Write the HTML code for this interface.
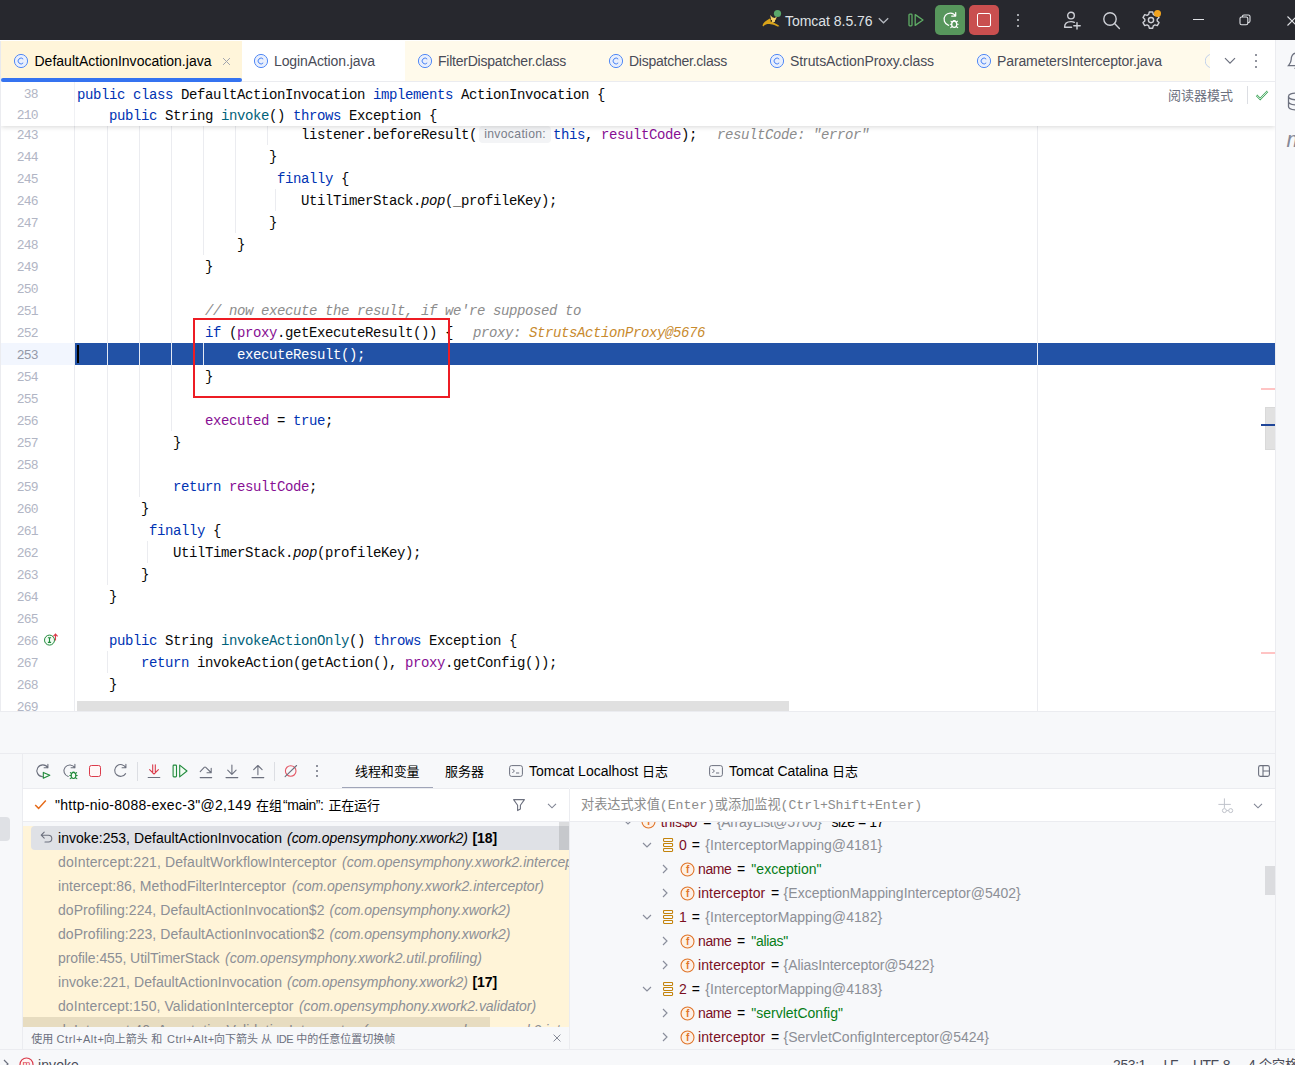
<!DOCTYPE html>
<html lang="zh"><head><meta charset="utf-8"><title>IDE</title>
<style>
*{box-sizing:border-box;margin:0;padding:0}
html,body{width:1295px;height:1065px;overflow:hidden;background:#f7f8fa}
body{position:relative;font-family:"Liberation Sans","Noto Sans CJK SC",sans-serif;font-size:13.5px;color:#000}
.a{position:absolute}
.t{position:absolute;white-space:pre;line-height:20px;height:20px}
svg{position:absolute;overflow:visible}
.mono{font-family:"Liberation Mono","Noto Sans CJK SC",monospace}
/* editor */
#ed{position:absolute;left:0;top:82px;width:1275px;height:629px;border-bottom:0;background:#fff;overflow:hidden;border-left:1px solid #ebecf0}
.ln{position:absolute;left:0;width:36.8px;padding-top:1.9px;text-align:right;font-family:"Liberation Mono",monospace;font-size:13px;letter-spacing:-.8px;line-height:22px;height:22px;color:#b1b5c4}
.cl{position:absolute;left:77px;white-space:pre;font-family:"Liberation Mono","Noto Sans CJK SC",monospace;font-size:14px;letter-spacing:-.4014px;line-height:22px;height:22px;color:#080808;padding-top:1px}
.k{color:#0033b3}.m{color:#00627a}.f{color:#871094}.c{color:#8c8c8c;font-style:italic}.i{font-style:italic}
.dv{color:#8c8c8c;font-style:italic}.do{color:#c88a2e;font-style:italic}
.g{position:absolute;width:1px;background:#ebecf0}
.hint{display:inline-block;width:76px;height:22px;vertical-align:top;position:relative}
.hint span{position:absolute;left:2px;top:1.8px;width:72px;height:17px;border-radius:4px;background:#f3f4f6;color:#7a7e8a;font-family:"Liberation Sans",sans-serif;font-size:12.2px;line-height:16.4px;text-align:center;letter-spacing:.33px;text-indent:.3px}

</style></head>
<body>
<div class="a" style="left:0;top:0;width:1295px;height:40px;background:#27282e"></div>
<svg style="left:762px;top:12px" width="20" height="16" viewBox="0 0 20 16">
<path d="M0.5 13.4 C1.2 11 3.6 8.8 7.8 6.6 L10 9.5 L12.2 11 C14.6 12 16.2 13 17.5 14.2 L15.5 14.6 C13.6 13.3 11 12.6 8.6 12.2 C6 11.8 3.4 12.2 1.2 14.4 Z" fill="#d9a319"/>
<path d="M8.2 3 L10.3 5.3 L12.6 5.9 L15 4.6 L13.7 7.4 L12.7 10 L10.6 10.5 L9.2 8.2 Z" fill="#f3cf66"/>
<circle cx="9.3" cy="8.9" r=".8" fill="#1a1a1a"/><circle cx="13.9" cy="8.7" r=".7" fill="#1a1a1a"/>
<circle cx="15.5" cy="1.5" r="3.6" fill="#5aa86b"/></svg>
<div class="t " style="left:785px;top:10.6px;font-size:14px;color:#dfe1e5;letter-spacing:-0.034px;font-style:normal;font-weight:normal;">Tomcat 8.5.76</div>
<svg style="left:878px;top:17px" width="11" height="8" viewBox="0 0 11 8"><path d="M0.8 1.2 L5.5 5.8 L10.2 1.2" fill="none" stroke="#b4b8bf" stroke-width="1.3"/></svg>
<svg style="left:908px;top:13px" width="17" height="14" viewBox="0 0 17 14"><rect x="1" y="1.2" width="3" height="11.6" rx="0.8" fill="none" stroke="#5fad65" stroke-width="1.3"/><path d="M7.2 1.6 L15 7 L7.2 12.4 Z" fill="none" stroke="#5fad65" stroke-width="1.3" stroke-linejoin="round"/></svg>
<div class="a" style="left:935px;top:5px;width:30px;height:30px;border-radius:5px;background:#57965c"></div>
<svg style="left:941.5px;top:10.5px" width="17" height="17" viewBox="0 0 16 16" fill="none" stroke="#fff" stroke-width="1.15" stroke-linecap="round" stroke-linejoin="round">
<path d="M6.2 13.5 A5.9 5.9 0 1 1 12.9 4.8 M12.9 1.4 V4.8 H9.1"/><ellipse cx="11.5" cy="12.5" rx="2.4" ry="3"/><path d="M10.2 9.9 A1.4 1.4 0 0 1 12.8 9.9 M9.1 12.5 H7.8 M13.9 12.5 H15.2 M9.6 14.6 L8.2 15.6 M13.4 14.6 L14.8 15.6 M9.6 10.6 L8.4 9.6 M13.4 10.6 L14.6 9.6" stroke-width="1"/></svg>
<div class="a" style="left:969px;top:5px;width:30px;height:30px;border-radius:5px;background:#c94f4f"></div>
<div class="a" style="left:977px;top:13px;width:14px;height:14px;border:1.6px solid #fff;border-radius:2px"></div>
<div class="a" style="left:1017px;top:13.5px;width:2.3px;height:2.3px;border-radius:2px;background:#ced0d6"></div>
<div class="a" style="left:1017px;top:18.9px;width:2.3px;height:2.3px;border-radius:2px;background:#ced0d6"></div>
<div class="a" style="left:1017px;top:24.5px;width:2.3px;height:2.3px;border-radius:2px;background:#ced0d6"></div>
<svg style="left:1063px;top:11px" width="19" height="19" viewBox="0 0 19 19" fill="none" stroke="#ced0d6" stroke-width="1.4" stroke-linecap="round">
<circle cx="8" cy="4.6" r="3.3"/><path d="M1.6 16.2 C1.6 12.4 4.4 10.6 8 10.6 C9.3 10.6 10.4 10.8 11.3 11.3 M1.6 16.2 H8.6"/><path d="M14 11.6 V18 M10.8 14.8 H17.2"/></svg>
<svg style="left:1102px;top:11px" width="19" height="19" viewBox="0 0 19 19" fill="none" stroke="#ced0d6" stroke-width="1.4" stroke-linecap="round"><circle cx="8" cy="8" r="6.2"/><path d="M12.6 12.6 L17.4 17.4"/></svg>
<svg style="left:1141px;top:10px" width="20" height="20" viewBox="0 0 20 20" fill="none" stroke="#ced0d6" stroke-width="1.4" stroke-linejoin="round">
<path d="M8.3 2 H11.7 L12.3 4.4 L13.9 5.3 L16.3 4.6 L18 7.6 L16.2 9.3 V10.9 L18 12.6 L16.3 15.6 L13.9 14.9 L12.3 15.8 L11.7 18.2 H8.3 L7.7 15.8 L6.1 14.9 L3.7 15.6 L2 12.6 L3.8 10.9 V9.3 L2 7.6 L3.7 4.6 L6.1 5.3 L7.7 4.4 Z"/><circle cx="10" cy="10.1" r="2.6"/></svg>
<div class="a" style="left:1154.2px;top:10px;width:7px;height:7px;border-radius:4px;background:#f2a41f"></div>
<div class="a" style="left:1193px;top:19px;width:10.5px;height:1.2px;background:#dfe1e5"></div>
<svg style="left:1239px;top:14px" width="12" height="12" viewBox="0 0 12 12" fill="none" stroke="#dfe1e5" stroke-width="1.1"><rect x="1" y="3" width="7.8" height="7.8" rx="1.6"/><path d="M3.4 3 V2.6 A1.6 1.6 0 0 1 5 1 H9.4 A1.6 1.6 0 0 1 11 2.6 V7 A1.6 1.6 0 0 1 9.4 8.6 H8.9"/></svg>
<svg style="left:1287px;top:16px" width="10" height="10" viewBox="0 0 10 10"><path d="M0.5 0.5 L9.5 9.5 M9.5 0.5 L0.5 9.5" stroke="#dfe1e5" stroke-width="1.1"/></svg>
<div class="a" style="left:0;top:40px;width:1275px;height:42px;background:#fff;border-bottom:1px solid #ebecf0"></div>
<div class="a" style="left:1px;top:41px;width:241px;height:40px;background:#fff5da"></div>
<div class="a" style="left:0;top:41px;width:1px;height:41px;background:#e8e9ee"></div>
<div class="a" style="left:405px;top:41px;width:805px;height:40px;background:#fffaeb"></div>
<div class="a" style="left:1px;top:78px;width:241px;height:4px;border-radius:2px;background:#3573f0;z-index:5"></div>
<svg style="left:13px;top:53px;opacity:1" width="16" height="16" viewBox="0 0 16 16"><circle cx="8" cy="8" r="6.6" fill="#e9effc" stroke="#4a84f6" stroke-width=".95"/><path d="M10.2 6.1 A2.9 2.9 0 1 0 10.2 9.9" fill="none" stroke="#4a84f6" stroke-width="1"/></svg>
<div class="t " style="left:34.5px;top:51.2px;font-size:14px;color:#000;letter-spacing:0.012px;font-style:normal;font-weight:normal;">DefaultActionInvocation.java</div>
<svg style="left:253px;top:53px;opacity:1" width="16" height="16" viewBox="0 0 16 16"><circle cx="8" cy="8" r="6.6" fill="#e9effc" stroke="#4a84f6" stroke-width=".95"/><path d="M10.2 6.1 A2.9 2.9 0 1 0 10.2 9.9" fill="none" stroke="#4a84f6" stroke-width="1"/></svg>
<div class="t " style="left:274px;top:51.2px;font-size:14px;color:#494b57;letter-spacing:-0.109px;font-style:normal;font-weight:normal;">LoginAction.java</div>
<svg style="left:417px;top:53px;opacity:1" width="16" height="16" viewBox="0 0 16 16"><circle cx="8" cy="8" r="6.6" fill="#e9effc" stroke="#4a84f6" stroke-width=".95"/><path d="M10.2 6.1 A2.9 2.9 0 1 0 10.2 9.9" fill="none" stroke="#4a84f6" stroke-width="1"/></svg>
<div class="t " style="left:438px;top:51.2px;font-size:14px;color:#494b57;letter-spacing:-0.229px;font-style:normal;font-weight:normal;">FilterDispatcher.class</div>
<svg style="left:608px;top:53px;opacity:1" width="16" height="16" viewBox="0 0 16 16"><circle cx="8" cy="8" r="6.6" fill="#e9effc" stroke="#4a84f6" stroke-width=".95"/><path d="M10.2 6.1 A2.9 2.9 0 1 0 10.2 9.9" fill="none" stroke="#4a84f6" stroke-width="1"/></svg>
<div class="t " style="left:629px;top:51.2px;font-size:14px;color:#494b57;letter-spacing:-0.246px;font-style:normal;font-weight:normal;">Dispatcher.class</div>
<svg style="left:769px;top:53px;opacity:1" width="16" height="16" viewBox="0 0 16 16"><circle cx="8" cy="8" r="6.6" fill="#e9effc" stroke="#4a84f6" stroke-width=".95"/><path d="M10.2 6.1 A2.9 2.9 0 1 0 10.2 9.9" fill="none" stroke="#4a84f6" stroke-width="1"/></svg>
<div class="t " style="left:790px;top:51.2px;font-size:14px;color:#494b57;letter-spacing:-0.087px;font-style:normal;font-weight:normal;">StrutsActionProxy.class</div>
<svg style="left:976px;top:53px;opacity:1" width="16" height="16" viewBox="0 0 16 16"><circle cx="8" cy="8" r="6.6" fill="#e9effc" stroke="#4a84f6" stroke-width=".95"/><path d="M10.2 6.1 A2.9 2.9 0 1 0 10.2 9.9" fill="none" stroke="#4a84f6" stroke-width="1"/></svg>
<div class="t " style="left:997px;top:51.2px;font-size:14px;color:#494b57;letter-spacing:-0.119px;font-style:normal;font-weight:normal;">ParametersInterceptor.java</div>
<svg style="left:221.8px;top:56.9px" width="9" height="9" viewBox="0 0 9 9"><path d="M1.1 1.1 L7.9 7.9 M7.9 1.1 L1.1 7.9" stroke="#a0a3ad" stroke-width="1"/></svg>
<svg style="left:1205px;top:53px;opacity:.3;overflow:hidden" width="5" height="16" viewBox="0 0 5 16"><path d="M7 1.2 A6.6 6.6 0 0 0 7 14.8" fill="none" stroke="#3574f0" stroke-width="1"/></svg>
<svg style="left:1224px;top:57px" width="12" height="8" viewBox="0 0 12 8"><path d="M1 1.2 L6 6.2 L11 1.2" fill="none" stroke="#6c707e" stroke-width="1.2"/></svg>
<div class="a" style="left:1255px;top:54px;width:2.2px;height:2.2px;border-radius:2px;background:#6c707e"></div>
<div class="a" style="left:1255px;top:60px;width:2.2px;height:2.2px;border-radius:2px;background:#6c707e"></div>
<div class="a" style="left:1255px;top:66px;width:2.2px;height:2.2px;border-radius:2px;background:#6c707e"></div>
<div class="a" style="left:1275px;top:40px;width:20px;height:1009px;background:#f7f8fa;border-left:1px solid #ebecf0"></div>
<svg style="left:1287px;top:52px" width="10" height="18" viewBox="0 0 10 18" fill="none" stroke="#6c707e" stroke-width="1.3"><path d="M10 1 C5.5 1 4.2 4.4 4.2 7.6 C4.2 10.6 2.6 12 1.4 13.6 H10"/><path d="M7.5 16.4 H10"/></svg>
<svg style="left:1287px;top:92px" width="10" height="19" viewBox="0 0 10 19" fill="none" stroke="#6c707e" stroke-width="1.3"><path d="M10 1 C5 1 1.5 2.4 1.5 4.4 V14.6 C1.5 16.6 5 18 10 18 M1.5 4.4 C1.5 6.4 5 7.8 10 7.8 M1.5 9.5 C1.5 11.5 5 12.9 10 12.9"/></svg>
<div class="t" style="left:1286.5px;top:127.7px;font-size:22px;line-height:24px;height:24px;font-style:italic;color:#858997;font-family:'Liberation Sans',sans-serif">m</div>
<div id="ed">
<div class="g" style="left:73px;top:0;height:631px"></div>
<div class="g" style="left:1036px;top:0;height:631px"></div>
<div class="a" style="left:0;top:261px;width:73px;height:22px;background:#f2f6fe"></div>
<div class="a" style="left:74px;top:261px;width:1200px;height:22px;background:#2252a6"></div>
<div class="a" style="left:1036px;top:261px;width:1px;height:22px;background:#e6ebf5"></div>
<div class="g" style="left:106px;top:41px;height:462px"></div>
<div class="g" style="left:106px;top:569px;height:22px"></div>
<div class="g" style="left:138px;top:41px;height:374px"></div>
<div class="g" style="left:170px;top:41px;height:308px"></div>
<div class="g" style="left:202px;top:41px;height:132px"></div>
<div class="g" style="left:234px;top:41px;height:110px"></div>
<div class="g" style="left:266px;top:41px;height:22px"></div>
<div class="g" style="left:274px;top:107px;height:22px"></div>
<div class="g" style="left:146px;top:459px;height:22px"></div>
<div class="a" style="left:106px;top:261px;width:1px;height:22px;background:#e4e9f4"></div>
<div class="a" style="left:138px;top:261px;width:1px;height:22px;background:#e4e9f4"></div>
<div class="a" style="left:170px;top:261px;width:1px;height:22px;background:#e4e9f4"></div>
<div class="a" style="left:202px;top:261px;width:1px;height:22px;background:#e4e9f4"></div>
<div class="a" style="left:76px;top:262.5px;width:2px;height:18px;background:#000"></div>
<div class="ln" style="top:41px">243</div>
<div class="cl" style="left:76px;top:41px">                            listener.beforeResult(<span class="hint"><span>invocation:</span></span><span class="k">this</span>, <span class="f">resultCode</span>);  <span class="dv" style="margin-left:4px">resultCode: "error"</span></div>
<div class="ln" style="top:63px">244</div>
<div class="cl" style="left:76px;top:63px">                        }</div>
<div class="ln" style="top:85px">245</div>
<div class="cl" style="left:76px;top:85px">                         <span class="k">finally</span> {</div>
<div class="ln" style="top:107px">246</div>
<div class="cl" style="left:76px;top:107px">                            UtilTimerStack.<span class="i">pop</span>(_profileKey);</div>
<div class="ln" style="top:129px">247</div>
<div class="cl" style="left:76px;top:129px">                        }</div>
<div class="ln" style="top:151px">248</div>
<div class="cl" style="left:76px;top:151px">                    }</div>
<div class="ln" style="top:173px">249</div>
<div class="cl" style="left:76px;top:173px">                }</div>
<div class="ln" style="top:195px">250</div>
<div class="ln" style="top:217px">251</div>
<div class="cl" style="left:76px;top:217px">                <span class="c">// now execute the result, if we're supposed to</span></div>
<div class="ln" style="top:239px">252</div>
<div class="cl" style="left:76px;top:239px">                <span class="k">if</span> (<span class="f">proxy</span>.getExecuteResult()) {  <span class="dv" style="margin-left:4px">proxy: </span><span class="do">StrutsActionProxy@5676</span></div>
<div class="ln" style="top:261px;color:#9499a8">253</div>
<div class="cl" style="left:76px;top:261px">                    <span style="color:#fff">executeResult();</span></div>
<div class="ln" style="top:283px">254</div>
<div class="cl" style="left:76px;top:283px">                }</div>
<div class="ln" style="top:305px">255</div>
<div class="ln" style="top:327px">256</div>
<div class="cl" style="left:76px;top:327px">                <span class="f">executed</span> = <span class="k">true</span>;</div>
<div class="ln" style="top:349px">257</div>
<div class="cl" style="left:76px;top:349px">            }</div>
<div class="ln" style="top:371px">258</div>
<div class="ln" style="top:393px">259</div>
<div class="cl" style="left:76px;top:393px">            <span class="k">return</span> <span class="f">resultCode</span>;</div>
<div class="ln" style="top:415px">260</div>
<div class="cl" style="left:76px;top:415px">        }</div>
<div class="ln" style="top:437px">261</div>
<div class="cl" style="left:76px;top:437px">         <span class="k">finally</span> {</div>
<div class="ln" style="top:459px">262</div>
<div class="cl" style="left:76px;top:459px">            UtilTimerStack.<span class="i">pop</span>(profileKey);</div>
<div class="ln" style="top:481px">263</div>
<div class="cl" style="left:76px;top:481px">        }</div>
<div class="ln" style="top:503px">264</div>
<div class="cl" style="left:76px;top:503px">    }</div>
<div class="ln" style="top:525px">265</div>
<div class="ln" style="top:547px">266</div>
<div class="cl" style="left:76px;top:547px">    <span class="k">public</span> String <span class="m">invokeActionOnly</span>() <span class="k">throws</span> Exception {</div>
<div class="ln" style="top:569px">267</div>
<div class="cl" style="left:76px;top:569px">        <span class="k">return</span> invokeAction(getAction(), <span class="f">proxy</span>.getConfig());</div>
<div class="ln" style="top:591px">268</div>
<div class="cl" style="left:76px;top:591px">    }</div>
<div class="ln" style="top:613px">269</div>
<svg style="left:42px;top:551px" width="16" height="14" viewBox="0 0 16 14"><circle cx="6.5" cy="7.1" r="5" fill="#f2fcf3" stroke="#208a3c" stroke-width="1"/><path d="M4.9 4.8 H8.1 M6.5 4.8 V9.4 M4.9 9.4 H8.1" stroke="#208a3c" stroke-width="1.1" fill="none"/><path d="M12.5 7.5 V1.3 M10.4 3.4 L12.5 1.1 L14.6 3.4" stroke="#db3b4b" stroke-width="1.1" fill="none"/></svg>
<div class="a" style="left:192px;top:236px;width:257px;height:80px;border:2px solid #ed1c24"></div>
<div class="a" style="left:76px;top:619px;width:712px;height:11px;background:#e0e0e0"></div>
<div class="a" style="left:0;top:0;width:1274px;height:44px;background:#fff;box-shadow:0 1px 5px rgba(0,0,0,.16)"></div>
<div class="g" style="left:73px;top:0;height:44px;background:#f0f1f4"></div>
<div class="ln" style="top:-0.20000000000000284px">38</div>
<div class="cl" style="left:76px;top:0.5px"><span class="k">public class</span> DefaultActionInvocation <span class="k">implements</span> ActionInvocation {</div>
<div class="ln" style="top:21.5px">210</div>
<div class="cl" style="left:76px;top:22.299999999999997px">    <span class="k">public</span> String <span class="m">invoke</span>() <span class="k">throws</span> Exception {</div>
<div class="t" style="left:1167px;top:3.799999999999997px;font-size:13px;color:#6c707e;letter-spacing:0">阅读器模式</div>
<div class="a" style="left:1246px;top:4px;width:1px;height:18px;background:#dcdee3"></div>
<svg style="left:1254px;top:7px" width="14" height="12" viewBox="0 0 14 12"><path d="M1.5 6.3 L5.2 10 L12.6 2.2" fill="none" stroke="#3aa356" stroke-width="2"/><path d="M1.5 6.3 L5.2 10 L12.6 2.2" fill="none" stroke="#fff" stroke-width="0.8"/></svg>
<div class="a" style="left:1260px;top:306px;width:14px;height:2px;background:#ffc4c4"></div>
<div class="a" style="left:1264px;top:325px;width:10px;height:43px;background:#e1e1e1;border:1px solid #d9d9d9;border-right:none"></div>
<div class="a" style="left:1260px;top:342px;width:14px;height:2px;background:#1f4699"></div>
<div class="a" style="left:1260px;top:570px;width:14px;height:2px;background:#ffc4c4"></div>
</div>
<div class="a" style="left:0;top:711px;width:1275px;height:1px;background:#ebecf0"></div>
<div class="a" style="left:0;top:753px;width:1275px;height:1px;background:#ebecf0"></div>
<div class="a" style="left:22px;top:753px;width:1px;height:296px;background:#ebecf0"></div>
<div class="a" style="left:0;top:817px;width:10px;height:24px;background:#dfe1e5;border-radius:0 4px 4px 0"></div>
<svg style="left:35.0px;top:763.0px" width="16" height="16" viewBox="0 0 16 16" fill="none" stroke-width="1.1" stroke-linecap="round" stroke-linejoin="round"><path d="M7.6 13.7 A5.9 5.9 0 1 1 12.9 4.8 M12.9 1.4 V4.8 H9.1" stroke="#6c707e"/><path d="M8.3 9.4 L14.8 12.3 L8.3 15.3 Z" stroke="#208a3c" fill="#f2fcf3"/></svg>
<svg style="left:61.5px;top:763.0px" width="16" height="16" viewBox="0 0 16 16" fill="none" stroke-width="1.1" stroke-linecap="round" stroke-linejoin="round"><path d="M6.2 13.5 A5.9 5.9 0 1 1 12.9 4.8 M12.9 1.4 V4.8 H9.1" stroke="#6c707e"/><ellipse cx="11.5" cy="12.5" rx="2.4" ry="3" stroke="#208a3c" fill="#f2fcf3"/><path d="M10.2 9.9 A1.4 1.4 0 0 1 12.8 9.9 M9.1 12.5 H7.8 M13.9 12.5 H15.2 M9.6 14.6 L8.2 15.6 M13.4 14.6 L14.8 15.6 M9.6 10.6 L8.4 9.6 M13.4 10.6 L14.6 9.6" stroke="#208a3c"/></svg>
<div class="a" style="left:89px;top:765px;width:12px;height:12px;border:1.2px solid #db3b4b;border-radius:2.4px;background:#fff7f7"></div>
<svg style="left:113.0px;top:763.0px" width="16" height="16" viewBox="0 0 16 16" fill="none" stroke-width="1.1" stroke-linecap="round" stroke-linejoin="round"><path d="M12.6 10.6 A5.9 5.9 0 1 1 12.9 4.8 M12.9 1.4 V4.8 H9.1" stroke="#6c707e"/></svg>
<div class="a" style="left:137px;top:762px;width:1px;height:19px;background:#dcdee3"></div>
<svg style="left:146.0px;top:763.0px" width="16" height="16" viewBox="0 0 16 16" fill="none" stroke-width="1.1" stroke-linecap="round" stroke-linejoin="round"><path d="M6.7 1.8 V10 M9.3 1.8 V10 M3.6 6.6 L8 11 L12.4 6.6" stroke="#db3b4b"/><path d="M2.2 14.5 H13.8" stroke="#6c707e"/></svg>
<svg style="left:172.0px;top:763.0px" width="16" height="16" viewBox="0 0 16 16" fill="none" stroke-width="1.1" stroke-linecap="round" stroke-linejoin="round"><rect x="1.1" y="2.1" width="3.4" height="11.8" rx="0.8" stroke="#208a3c" fill="#f2fcf3"/><path d="M7.7 2.1 L15 8 L7.7 13.9 Z" stroke="#208a3c" fill="#f2fcf3"/></svg>
<svg style="left:198.0px;top:763.0px" width="16" height="16" viewBox="0 0 16 16" fill="none" stroke-width="1.1" stroke-linecap="round" stroke-linejoin="round"><path d="M2.2 8.6 L6.2 4.4 Q7 3.7 7.8 4.4 L13 9.5 M13.2 5.2 V9.7 H9 M2.2 14.6 H13.7" stroke="#6c707e"/></svg>
<svg style="left:224.0px;top:763.0px" width="16" height="16" viewBox="0 0 16 16" fill="none" stroke-width="1.1" stroke-linecap="round" stroke-linejoin="round"><path d="M7.9 2.1 V11.1 M3.7 7.1 L7.9 11.3 L12.1 7.1 M2 14.6 H13.8" stroke="#6c707e"/></svg>
<svg style="left:250.0px;top:763.0px" width="16" height="16" viewBox="0 0 16 16" fill="none" stroke-width="1.1" stroke-linecap="round" stroke-linejoin="round"><path d="M7.9 11.7 V2.7 M3.7 6.7 L7.9 2.5 L12.1 6.7 M2 14.6 H13.8" stroke="#6c707e"/></svg>
<div class="a" style="left:274px;top:762px;width:1px;height:19px;background:#dcdee3"></div>
<svg style="left:283.0px;top:763.0px" width="16" height="16" viewBox="0 0 16 16" fill="none" stroke-width="1.1" stroke-linecap="round" stroke-linejoin="round"><circle cx="7.7" cy="8" r="5.3" stroke="#e55765"/><path d="M2.1 13.7 L13.6 2.5" stroke="#6c707e"/></svg>
<div class="a" style="left:316px;top:764.9px;width:2.2px;height:2.2px;border-radius:2px;background:#6c707e"></div>
<div class="a" style="left:316px;top:770px;width:2.2px;height:2.2px;border-radius:2px;background:#6c707e"></div>
<div class="a" style="left:316px;top:775.3px;width:2.2px;height:2.2px;border-radius:2px;background:#6c707e"></div>
<div class="t" style="left:355px;top:761.8px;font-size:13px;letter-spacing:-.1px">线程和变量</div>
<div class="a" style="left:342px;top:787px;width:91px;height:2px;background:#a0a5b8"></div>
<div class="t" style="left:445px;top:761.8px;font-size:13px;letter-spacing:0px">服务器</div>
<svg style="left:509px;top:765px" width="14" height="12" viewBox="0 0 14 12" fill="none" stroke="#6c707e" stroke-width="1"><rect x=".6" y=".6" width="12.8" height="10.8" rx="2"/><path d="M3.4 4 L5.4 6 L3.4 8 M7 8 H10.2"/></svg>
<div class="t " style="left:529px;top:761.0px;font-size:14px;color:#000;letter-spacing:0.010px;font-style:normal;font-weight:normal;">Tomcat Localhost </div>
<div class="t" style="left:642px;top:761.8px;font-size:13px">日志</div>
<svg style="left:709px;top:765px" width="14" height="12" viewBox="0 0 14 12" fill="none" stroke="#6c707e" stroke-width="1"><rect x=".6" y=".6" width="12.8" height="10.8" rx="2"/><path d="M3.4 4 L5.4 6 L3.4 8 M7 8 H10.2"/></svg>
<div class="t " style="left:729px;top:761.0px;font-size:14px;color:#000;letter-spacing:-0.079px;font-style:normal;font-weight:normal;">Tomcat Catalina </div>
<div class="t" style="left:832px;top:761.8px;font-size:13px">日志</div>
<svg style="left:1258px;top:765px" width="12" height="12" viewBox="0 0 12 12" fill="none" stroke="#6c707e" stroke-width="1.1"><rect x=".6" y=".6" width="10.8" height="10.8" rx="1.8"/><path d="M5 .6 V11.4 M5 6 H11.4"/></svg>
<div class="a" style="left:23px;top:788px;width:546px;height:34px;background:#fff;border-top:1px solid #ebecf0;border-bottom:1px solid #ebecf0"></div>
<svg style="left:34px;top:799px" width="13" height="11" viewBox="0 0 13 11"><path d="M1.2 6 L4.6 9.4 L11.8 1.6" fill="none" stroke="#e56b1a" stroke-width="1.5"/></svg>
<div class="t " style="left:55px;top:795.0px;font-size:14px;color:#000;letter-spacing:0.290px;font-style:normal;font-weight:normal;">&quot;http-nio-8088-exec-3&quot;@2,149</div>
<div class="t" style="left:256px;top:795.6px;font-size:13px;letter-spacing:0">在组</div>
<div class="t " style="left:283px;top:795.0px;font-size:14px;color:#000;letter-spacing:-0.437px;font-style:normal;font-weight:normal;">“main”:</div>
<div class="t" style="left:328.5px;top:795.6px;font-size:13px;letter-spacing:-.2px">正在运行</div>
<svg style="left:512px;top:798px" width="14" height="14" viewBox="0 0 14 14" fill="none" stroke="#6c707e" stroke-width="1.1" stroke-linejoin="round"><path d="M1.6 1.6 H12.4 L8.4 7.2 V11 L5.6 12.6 V7.2 Z"/></svg>
<svg style="left:546.5px;top:803px" width="10" height="6" viewBox="0 0 10 6"><path d="M1 .8 L5 4.8 L9 .8" fill="none" stroke="#818594" stroke-width="1.1"/></svg>
<div class="a" style="left:569px;top:789px;width:1px;height:260px;background:#ebecf0"></div>
<div class="a" style="left:570px;top:788px;width:705px;height:34px;background:#fff;border-top:1px solid #ebecf0;border-bottom:1px solid #ebecf0"></div>
<div class="t mono" style="left:581px;top:796px;font-size:13.2px;color:#8c8c8c;letter-spacing:-.05px">对表达式求值(Enter)或添加监视(Ctrl+Shift+Enter)</div>
<svg style="left:1217px;top:796px" width="16" height="18" viewBox="0 0 16 18" fill="none" stroke="#c0c3cb" stroke-width="1"><path d="M7.4 2.4 V11.9 M1.4 8.4 H13.8"/><circle cx="7.4" cy="14.6" r="2"/><circle cx="13.7" cy="14.6" r="2"/><path d="M9.4 14.6 H11.7"/></svg>
<svg style="left:1253px;top:803px" width="10" height="6" viewBox="0 0 10 6"><path d="M1 .8 L5 4.8 L9 .8" fill="none" stroke="#818594" stroke-width="1.1"/></svg>
<div class="a" id="fr" style="left:23px;top:822px;width:546px;height:205px;background:#fff4d8;overflow:hidden">
<div class="a" style="left:0;top:0;width:546px;height:4px;background:#f7f8fa"></div>
<div class="a" style="left:8px;top:4px;width:538px;height:24px;border-radius:4px 0 0 4px;background:#dfe1e6"></div>
<div class="a" style="left:536px;top:0;width:10px;height:28px;background:rgba(0,0,0,.11)"></div>
<svg style="left:17.4px;top:9.399999999999977px" width="13" height="12" viewBox="0 0 13 12" fill="none" stroke="#6c707e" stroke-width="1.1" stroke-linecap="round" stroke-linejoin="round"><path d="M4.2 1.2 L1.2 4.2 L4.2 7.2 M1.4 4.2 H8.4 A3.4 3.4 0 0 1 8.4 11 H5"/></svg>
<div class="t " style="left:35px;top:6.0px;font-size:14px;color:#000;letter-spacing:0.040px;font-style:normal;font-weight:normal;">invoke:253, DefaultActionInvocation</div>
<div class="t " style="left:264px;top:6.0px;font-size:14px;color:#000;letter-spacing:-0.033px;font-style:italic;font-weight:normal;">(com.opensymphony.xwork2)</div>
<div class="t " style="left:449.5px;top:6.0px;font-size:14px;color:#000;letter-spacing:-0.100px;font-style:normal;font-weight:bold;">[18]</div>
<div class="t " style="left:35px;top:30.0px;font-size:14px;color:#8c8f96;letter-spacing:0.112px;font-style:normal;font-weight:normal;">doIntercept:221, DefaultWorkflowInterceptor</div>
<div class="t " style="left:319px;top:30.0px;font-size:14px;color:#8c8f96;letter-spacing:0.004px;font-style:italic;font-weight:normal;">(com.opensymphony.xwork2.interceptor)</div>
<div class="t " style="left:35px;top:54.0px;font-size:14px;color:#8c8f96;letter-spacing:0.063px;font-style:normal;font-weight:normal;">intercept:86, MethodFilterInterceptor</div>
<div class="t " style="left:269px;top:54.0px;font-size:14px;color:#8c8f96;letter-spacing:0.004px;font-style:italic;font-weight:normal;">(com.opensymphony.xwork2.interceptor)</div>
<div class="t " style="left:35px;top:78.0px;font-size:14px;color:#8c8f96;letter-spacing:0.063px;font-style:normal;font-weight:normal;">doProfiling:224, DefaultActionInvocation$2</div>
<div class="t " style="left:306.5px;top:78.0px;font-size:14px;color:#8c8f96;letter-spacing:-0.033px;font-style:italic;font-weight:normal;">(com.opensymphony.xwork2)</div>
<div class="t " style="left:35px;top:102.0px;font-size:14px;color:#8c8f96;letter-spacing:0.063px;font-style:normal;font-weight:normal;">doProfiling:223, DefaultActionInvocation$2</div>
<div class="t " style="left:306.5px;top:102.0px;font-size:14px;color:#8c8f96;letter-spacing:-0.033px;font-style:italic;font-weight:normal;">(com.opensymphony.xwork2)</div>
<div class="t " style="left:35px;top:126.0px;font-size:14px;color:#8c8f96;letter-spacing:-0.080px;font-style:normal;font-weight:normal;">profile:455, UtilTimerStack</div>
<div class="t " style="left:202px;top:126.0px;font-size:14px;color:#8c8f96;letter-spacing:0.012px;font-style:italic;font-weight:normal;">(com.opensymphony.xwork2.util.profiling)</div>
<div class="t " style="left:35px;top:150.0px;font-size:14px;color:#8c8f96;letter-spacing:0.040px;font-style:normal;font-weight:normal;">invoke:221, DefaultActionInvocation</div>
<div class="t " style="left:264px;top:150.0px;font-size:14px;color:#8c8f96;letter-spacing:-0.033px;font-style:italic;font-weight:normal;">(com.opensymphony.xwork2)</div>
<div class="t " style="left:449.5px;top:150.0px;font-size:14px;color:#000;letter-spacing:-0.100px;font-style:normal;font-weight:bold;">[17]</div>
<div class="t " style="left:35px;top:174.0px;font-size:14px;color:#8c8f96;letter-spacing:0.080px;font-style:normal;font-weight:normal;">doIntercept:150, ValidationInterceptor</div>
<div class="t " style="left:276px;top:174.0px;font-size:14px;color:#8c8f96;letter-spacing:-0.046px;font-style:italic;font-weight:normal;">(com.opensymphony.xwork2.validator)</div>
<div class="t " style="left:35px;top:198.0px;font-size:14px;color:#8c8f96;letter-spacing:0.195px;font-style:normal;font-weight:normal;">doIntercept:40, AnnotationValidationInterceptor</div>
<div class="t " style="left:340px;top:198.0px;font-size:14px;color:#8c8f96;letter-spacing:0.049px;font-style:italic;font-weight:normal;">(com.opensymphony.xwork2.interceptor.annotations)</div>
<div class="a" style="left:0;top:195px;width:467px;height:10px;background:rgba(110,100,80,.17)"></div>
</div>
<div class="a" style="left:23px;top:1027px;width:546px;height:22px;background:#f7f8fa"></div>
<div class="t" style="left:31.2px;top:1029.2px;font-size:11px;color:#6c707e">使用</div>
<div class="t " style="left:56.6px;top:1029.2px;font-size:11px;color:#6c707e;letter-spacing:0.567px;font-style:normal;font-weight:normal;">Ctrl+Alt+</div>
<div class="t" style="left:103.8px;top:1029.2px;font-size:11px;color:#6c707e">向上箭头</div>
<div class="t" style="left:151.3px;top:1029.2px;font-size:11px;color:#6c707e">和</div>
<div class="t " style="left:166.9px;top:1029.2px;font-size:11px;color:#6c707e;letter-spacing:0.567px;font-style:normal;font-weight:normal;">Ctrl+Alt+</div>
<div class="t" style="left:214.1px;top:1029.2px;font-size:11px;color:#6c707e">向下箭头</div>
<div class="t" style="left:261.0px;top:1029.2px;font-size:11px;color:#6c707e">从</div>
<div class="t " style="left:276.3px;top:1029.2px;font-size:11px;color:#6c707e;letter-spacing:-0.579px;font-style:normal;font-weight:normal;">IDE</div>
<div class="t" style="left:296.2px;top:1029.2px;font-size:11px;color:#6c707e">中的任意位置切换帧</div>
<svg style="left:553px;top:1034px" width="8" height="8" viewBox="0 0 8 8"><path d="M.6 .6 L7.4 7.4 M7.4 .6 L.6 7.4" stroke="#868a97" stroke-width="1"/></svg>
<div class="a" id="vr" style="left:570px;top:822px;width:705px;height:227px;overflow:hidden;background:#f7f8fa">
<svg style="left:53px;top:-3.5px" width="10" height="7" viewBox="0 0 10 7"><path d="M1 1 L5 5 L9 1" fill="none" stroke="#8a8e9c" stroke-width="1.15"/></svg>
<svg style="left:71.10000000000002px;top:-7.7999999999999545px" width="15" height="15" viewBox="0 0 15 15"><circle cx="7.5" cy="7.5" r="6.5" fill="#fdf1e7" stroke="#e0752a" stroke-width="1.1"/><text x="7.6" y="11" text-anchor="middle" font-family="Liberation Sans,sans-serif" font-weight="bold" font-size="10" fill="#e0752a">f</text></svg>
<div class="t " style="left:90.70000000000005px;top:-10.3px;font-size:14px;color:#7b0f1f;letter-spacing:-0.127px;font-style:normal;font-weight:normal;">this$0</div>
<div class="t " style="left:133.29999999999995px;top:-10.3px;font-size:14px;color:#000;letter-spacing:0.000px;font-style:normal;font-weight:normal;">=</div>
<div class="t " style="left:147px;top:-10.3px;font-size:14px;color:#8c8f96;letter-spacing:-0.359px;font-style:normal;font-weight:normal;">{ArrayList@5700}</div>
<div class="t " style="left:261.6px;top:-10.3px;font-size:14px;color:#000;letter-spacing:-0.469px;font-style:normal;font-weight:normal;">size = 17</div>
<svg style="left:72px;top:19.799999999999955px" width="10" height="7" viewBox="0 0 10 7"><path d="M1 1 L5 5 L9 1" fill="none" stroke="#8a8e9c" stroke-width="1.15"/></svg>
<svg style="left:93px;top:16px" width="11" height="14" viewBox="0 0 11 14" fill="none" stroke="#c4840c" stroke-width="1.1"><rect x=".55" y=".55" width="9" height="2.9" rx=".6"/><rect x=".55" y="5.55" width="9" height="2.9" rx=".6"/><rect x=".55" y="10.55" width="9" height="2.9" rx=".6"/></svg>
<div class="t " style="left:109px;top:13.0px;font-size:14px;color:#7b0f1f;letter-spacing:0.000px;font-style:normal;font-weight:normal;">0</div>
<div class="t " style="left:121.70000000000005px;top:13.0px;font-size:14px;color:#000;letter-spacing:0.000px;font-style:normal;font-weight:normal;">=</div>
<div class="t " style="left:135.29999999999995px;top:13.0px;font-size:14px;color:#8c8f96;letter-spacing:0.066px;font-style:normal;font-weight:normal;">{InterceptorMapping@4181}</div>
<svg style="left:92.39999999999998px;top:42px" width="7" height="10" viewBox="0 0 7 10"><path d="M1 1 L5 5 L1 9" fill="none" stroke="#8a8e9c" stroke-width="1.15"/></svg>
<svg style="left:109.5px;top:39.5px" width="15" height="15" viewBox="0 0 15 15"><circle cx="7.5" cy="7.5" r="6.5" fill="#fdf1e7" stroke="#e0752a" stroke-width="1.1"/><text x="7.6" y="11" text-anchor="middle" font-family="Liberation Sans,sans-serif" font-weight="bold" font-size="10" fill="#e0752a">f</text></svg>
<div class="t " style="left:128px;top:37.0px;font-size:14px;color:#7b0f1f;letter-spacing:-0.405px;font-style:normal;font-weight:normal;">name</div>
<div class="t " style="left:167px;top:37.0px;font-size:14px;color:#000;letter-spacing:0.000px;font-style:normal;font-weight:normal;">=</div>
<div class="t " style="left:181.29999999999995px;top:37.0px;font-size:14px;color:#067d17;letter-spacing:0.039px;font-style:normal;font-weight:normal;">&quot;exception&quot;</div>
<svg style="left:92.39999999999998px;top:66px" width="7" height="10" viewBox="0 0 7 10"><path d="M1 1 L5 5 L1 9" fill="none" stroke="#8a8e9c" stroke-width="1.15"/></svg>
<svg style="left:109.5px;top:63.5px" width="15" height="15" viewBox="0 0 15 15"><circle cx="7.5" cy="7.5" r="6.5" fill="#fdf1e7" stroke="#e0752a" stroke-width="1.1"/><text x="7.6" y="11" text-anchor="middle" font-family="Liberation Sans,sans-serif" font-weight="bold" font-size="10" fill="#e0752a">f</text></svg>
<div class="t " style="left:128px;top:61.0px;font-size:14px;color:#7b0f1f;letter-spacing:0.114px;font-style:normal;font-weight:normal;">interceptor</div>
<div class="t " style="left:201px;top:61.0px;font-size:14px;color:#000;letter-spacing:0.000px;font-style:normal;font-weight:normal;">=</div>
<div class="t " style="left:213.60000000000002px;top:61.0px;font-size:14px;color:#8c8f96;letter-spacing:0.011px;font-style:normal;font-weight:normal;">{ExceptionMappingInterceptor@5402}</div>
<svg style="left:72px;top:91.79999999999995px" width="10" height="7" viewBox="0 0 10 7"><path d="M1 1 L5 5 L9 1" fill="none" stroke="#8a8e9c" stroke-width="1.15"/></svg>
<svg style="left:93px;top:88px" width="11" height="14" viewBox="0 0 11 14" fill="none" stroke="#c4840c" stroke-width="1.1"><rect x=".55" y=".55" width="9" height="2.9" rx=".6"/><rect x=".55" y="5.55" width="9" height="2.9" rx=".6"/><rect x=".55" y="10.55" width="9" height="2.9" rx=".6"/></svg>
<div class="t " style="left:109px;top:85.0px;font-size:14px;color:#7b0f1f;letter-spacing:0.000px;font-style:normal;font-weight:normal;">1</div>
<div class="t " style="left:121.70000000000005px;top:85.0px;font-size:14px;color:#000;letter-spacing:0.000px;font-style:normal;font-weight:normal;">=</div>
<div class="t " style="left:135.29999999999995px;top:85.0px;font-size:14px;color:#8c8f96;letter-spacing:0.066px;font-style:normal;font-weight:normal;">{InterceptorMapping@4182}</div>
<svg style="left:92.39999999999998px;top:114px" width="7" height="10" viewBox="0 0 7 10"><path d="M1 1 L5 5 L1 9" fill="none" stroke="#8a8e9c" stroke-width="1.15"/></svg>
<svg style="left:109.5px;top:111.5px" width="15" height="15" viewBox="0 0 15 15"><circle cx="7.5" cy="7.5" r="6.5" fill="#fdf1e7" stroke="#e0752a" stroke-width="1.1"/><text x="7.6" y="11" text-anchor="middle" font-family="Liberation Sans,sans-serif" font-weight="bold" font-size="10" fill="#e0752a">f</text></svg>
<div class="t " style="left:128px;top:109.0px;font-size:14px;color:#7b0f1f;letter-spacing:-0.405px;font-style:normal;font-weight:normal;">name</div>
<div class="t " style="left:167px;top:109.0px;font-size:14px;color:#000;letter-spacing:0.000px;font-style:normal;font-weight:normal;">=</div>
<div class="t " style="left:181.29999999999995px;top:109.0px;font-size:14px;color:#067d17;letter-spacing:-0.305px;font-style:normal;font-weight:normal;">&quot;alias&quot;</div>
<svg style="left:92.39999999999998px;top:138px" width="7" height="10" viewBox="0 0 7 10"><path d="M1 1 L5 5 L1 9" fill="none" stroke="#8a8e9c" stroke-width="1.15"/></svg>
<svg style="left:109.5px;top:135.5px" width="15" height="15" viewBox="0 0 15 15"><circle cx="7.5" cy="7.5" r="6.5" fill="#fdf1e7" stroke="#e0752a" stroke-width="1.1"/><text x="7.6" y="11" text-anchor="middle" font-family="Liberation Sans,sans-serif" font-weight="bold" font-size="10" fill="#e0752a">f</text></svg>
<div class="t " style="left:128px;top:133.0px;font-size:14px;color:#7b0f1f;letter-spacing:0.114px;font-style:normal;font-weight:normal;">interceptor</div>
<div class="t " style="left:201px;top:133.0px;font-size:14px;color:#000;letter-spacing:0.000px;font-style:normal;font-weight:normal;">=</div>
<div class="t " style="left:213.60000000000002px;top:133.0px;font-size:14px;color:#8c8f96;letter-spacing:-0.069px;font-style:normal;font-weight:normal;">{AliasInterceptor@5422}</div>
<svg style="left:72px;top:163.79999999999995px" width="10" height="7" viewBox="0 0 10 7"><path d="M1 1 L5 5 L9 1" fill="none" stroke="#8a8e9c" stroke-width="1.15"/></svg>
<svg style="left:93px;top:160px" width="11" height="14" viewBox="0 0 11 14" fill="none" stroke="#c4840c" stroke-width="1.1"><rect x=".55" y=".55" width="9" height="2.9" rx=".6"/><rect x=".55" y="5.55" width="9" height="2.9" rx=".6"/><rect x=".55" y="10.55" width="9" height="2.9" rx=".6"/></svg>
<div class="t " style="left:109px;top:157.0px;font-size:14px;color:#7b0f1f;letter-spacing:0.000px;font-style:normal;font-weight:normal;">2</div>
<div class="t " style="left:121.70000000000005px;top:157.0px;font-size:14px;color:#000;letter-spacing:0.000px;font-style:normal;font-weight:normal;">=</div>
<div class="t " style="left:135.29999999999995px;top:157.0px;font-size:14px;color:#8c8f96;letter-spacing:0.066px;font-style:normal;font-weight:normal;">{InterceptorMapping@4183}</div>
<svg style="left:92.39999999999998px;top:186px" width="7" height="10" viewBox="0 0 7 10"><path d="M1 1 L5 5 L1 9" fill="none" stroke="#8a8e9c" stroke-width="1.15"/></svg>
<svg style="left:109.5px;top:183.5px" width="15" height="15" viewBox="0 0 15 15"><circle cx="7.5" cy="7.5" r="6.5" fill="#fdf1e7" stroke="#e0752a" stroke-width="1.1"/><text x="7.6" y="11" text-anchor="middle" font-family="Liberation Sans,sans-serif" font-weight="bold" font-size="10" fill="#e0752a">f</text></svg>
<div class="t " style="left:128px;top:181.0px;font-size:14px;color:#7b0f1f;letter-spacing:-0.405px;font-style:normal;font-weight:normal;">name</div>
<div class="t " style="left:167px;top:181.0px;font-size:14px;color:#000;letter-spacing:0.000px;font-style:normal;font-weight:normal;">=</div>
<div class="t " style="left:181.29999999999995px;top:181.0px;font-size:14px;color:#067d17;letter-spacing:-0.003px;font-style:normal;font-weight:normal;">&quot;servletConfig&quot;</div>
<svg style="left:92.39999999999998px;top:210px" width="7" height="10" viewBox="0 0 7 10"><path d="M1 1 L5 5 L1 9" fill="none" stroke="#8a8e9c" stroke-width="1.15"/></svg>
<svg style="left:109.5px;top:207.5px" width="15" height="15" viewBox="0 0 15 15"><circle cx="7.5" cy="7.5" r="6.5" fill="#fdf1e7" stroke="#e0752a" stroke-width="1.1"/><text x="7.6" y="11" text-anchor="middle" font-family="Liberation Sans,sans-serif" font-weight="bold" font-size="10" fill="#e0752a">f</text></svg>
<div class="t " style="left:128px;top:205.0px;font-size:14px;color:#7b0f1f;letter-spacing:0.114px;font-style:normal;font-weight:normal;">interceptor</div>
<div class="t " style="left:201px;top:205.0px;font-size:14px;color:#000;letter-spacing:0.000px;font-style:normal;font-weight:normal;">=</div>
<div class="t " style="left:213.60000000000002px;top:205.0px;font-size:14px;color:#8c8f96;letter-spacing:-0.009px;font-style:normal;font-weight:normal;">{ServletConfigInterceptor@5424}</div>
<div class="a" style="left:695px;top:44px;width:10px;height:29px;background:#dbdcdf"></div>
</div>
<div class="a" style="left:0;top:1049px;width:1295px;height:16px;background:#f7f8fa;border-top:1px solid #ebecf0;overflow:hidden"></div>
<svg style="left:2.5px;top:1059px" width="7" height="10" viewBox="0 0 7 10"><path d="M1 1 L5 5 L1 9" fill="none" stroke="#6c707e" stroke-width="1.2"/></svg>
<svg style="left:18.6px;top:1056.6px" width="15" height="15" viewBox="0 0 15 15"><circle cx="7.5" cy="7.5" r="6.5" fill="#fff5f5" stroke="#d93a4a" stroke-width="1.2"/><text x="7.5" y="9.8" text-anchor="middle" font-family="Liberation Sans,sans-serif" font-size="9.5" fill="#db3b4b">m</text></svg>
<div class="t " style="left:38px;top:1055.0px;font-size:14px;color:#494b57;letter-spacing:0.088px;font-style:normal;font-weight:normal;">invoke</div>
<div class="t " style="left:1113px;top:1055.0px;font-size:14px;color:#494b57;letter-spacing:-0.407px;font-style:normal;font-weight:normal;">253:1</div>
<div class="t " style="left:1163.5px;top:1055.0px;font-size:14px;color:#494b57;letter-spacing:-1.169px;font-style:normal;font-weight:normal;">LF</div>
<div class="t " style="left:1193px;top:1055.0px;font-size:14px;color:#494b57;letter-spacing:-0.533px;font-style:normal;font-weight:normal;">UTF-8</div>
<div class="t " style="left:1248px;top:1055.0px;font-size:14px;color:#494b57;letter-spacing:0.000px;font-style:normal;font-weight:normal;">4 </div>
<div class="t" style="left:1259px;top:1055px;font-size:13px;color:#494b57">个空格</div>
</body></html>
